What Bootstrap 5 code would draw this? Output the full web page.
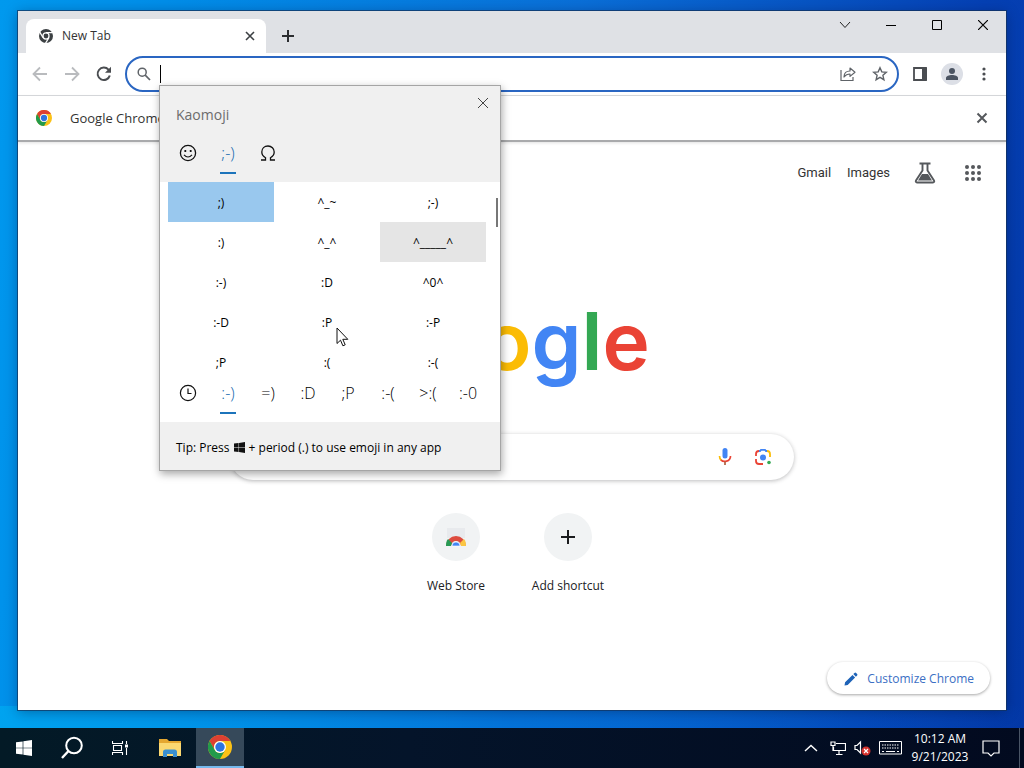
<!DOCTYPE html>
<html lang="en">
<head>
<meta charset="utf-8">
<meta name="viewport" content="width=device-width, initial-scale=1">
<title>New Tab</title>
<link href="https://cdn.jsdelivr.net/npm/bootstrap@5.3.0/dist/css/bootstrap.min.css" rel="stylesheet">
<style>
  body { font-family: "Open Sans", "Noto Sans", sans-serif; font-size: 12px; line-height: 18px; color: #333; background: linear-gradient(100deg, #0099ee 0%, #0090ea 12%, #0a6fd8 50%, #0540b4 85%, #0337a5 100%); }
  button { background: none; border: 0; padding: 0; color: inherit; }
  svg { display: block; flex: none; }
  a { color: inherit; text-decoration: none; }
  .desktop { padding: 11px 18px 18px; background: linear-gradient(90deg, rgba(0,165,240,.9), rgba(0,120,220,.6) 50%, rgba(0,60,180,0)) bottom / 100% 22px no-repeat; }
  .browser { background: #fff; box-shadow: 0 0 0 1px rgba(20,50,90,.7), 0 2px 12px rgba(0,20,60,.4); }
  .strip { background: #dfe1e5; height: 42px; padding-left: 8px; }
  .page-tab { background: #fff; width: 240px; height: 34px; border-radius: 8px 8px 0 0; padding: 0 10px 0 12px; }
  .new-tab { height: 34px; }
  .strip .caption { width: 46px; height: 28px; }
  .tools { height: 43px; border-bottom: 1px solid #d9dbde; padding: 0 15px 0 10px; }
  .tool-group { gap: 14px; margin-left: 14px; }
  .omni { height: 36px; border: 2px solid #2a66c2; border-radius: 18px; padding: 0 9px 0 10px; margin-left: 9px; }
  .omni input { border: 0; outline: 0; background: none; min-width: 0; font-size: 14px; }
  .caret { width: 1px; height: 18px; background: #000; margin-left: 9px; }
  .avatar { width: 22px; height: 22px; border-radius: 50%; background: #dcdfe6; }
  .infobar { height: 46px; padding: 0 18px; gap: 18px; border-bottom: 2px solid #a9aaac; font-size: 13px; box-shadow: 0 1px 3px rgba(0,0,0,.12); }
  .page-links { padding: 20px 24px 0 0; font: 13px/18px Roboto, sans-serif; color: #333; }
  .logo { font: 600 80px/106px Inter, sans-serif; color: #4285f4; margin-top: 104px; }
  .logo .r { color: #ea4335; } .logo .y { color: #fbbc05; } .logo .g { color: #34a853; }
  .hunt { width: 564px; max-width: 90%; height: 46px; border-radius: 23px; box-shadow: 0 1px 4px rgba(32,33,36,.3); padding: 0 22px 0 22px; margin-top: 40px; }
  .hunt input { border: 0; outline: 0; min-width: 0; background: none; }
  .tiles { margin-top: 33px; }
  .tile { width: 112px; color: #202124; }
  .disc { width: 48px; height: 48px; border-radius: 50%; background: #f1f3f4; }
  .customize { height: 32px; border-radius: 16px; padding: 1px 16px 0; margin: 0 16px 16px 0; color: #3b6fc4; box-shadow: 0 1px 3px rgba(0,0,0,.35); }
  .picker { left: 141px; top: 74px; width: 342px; background: #fff; border: 1px solid #a5a5a5; box-shadow: 1px 3px 8px rgba(0,0,0,.35); color: #000; z-index: 5; }
  .picker-head { background: #f0f0f0; height: 96px; padding: 0 8px; }
  .picker-head h1 { font-size: 14px; line-height: 20px; color: #6c6c6c; margin: 19px 0 0 8px; font-weight: 400; }
  .glyph-tab { width: 40px; height: 40px; padding: 2px 0 4px; font-size: 16px; font-weight: 300; position: relative; }
  .glyph-tab.on { color: #0f66ad; }
  .glyph-tab.on::after { content: ""; position: absolute; left: 12px; right: 12px; bottom: 0; height: 2px; background: #1c74bb; }
  .faces { height: 192px; overflow: hidden; padding: 0 14px 0 8px; }
  .faces-grid { display: grid; grid-template-columns: repeat(3, 1fr); grid-auto-rows: 40px; }
  .faces button { padding-top: 2px; }
  .faces .chosen { background: #99c8ee; } .faces .hovered { background: #e5e5e5; }
  .thumb { right: 2px; top: 112px; width: 2px; height: 29px; background: #777; }
  .picker-foot { background: #f0f0f0; height: 48px; padding: 3px 16px 0; gap: 4px; }
  .pointer { left: 176px; top: 241px; }
  .taskbar { height: 40px; background: linear-gradient(90deg, #031a26, #04142a 40%, #020a1f); color: #fff; }
  .taskbar .app { width: 48px; height: 40px; }
  .taskbar .app.active { background: #36495a; border-bottom: 2px solid #76b9ed; }
  .tray { gap: 8px; }
  .clock { width: 60px; }
  .tray .notes { margin: 0 11px 0 4px; }
  .peek { width: 5px; height: 40px; border-left: 1px solid #4a5566; }
</style>
</head>
<body class="vh-100 d-flex flex-column overflow-hidden">
<main class="desktop flex-grow-1 d-flex">
  <section class="browser flex-grow-1 d-flex flex-column position-relative">
    <div class="strip d-flex align-items-end">
      <div class="page-tab d-flex align-items-center gap-2">
        <svg width="16" height="16" viewBox="0 0 24 24"><circle cx="12" cy="12" r="10.500" fill="#3c4043"/><circle cx="12" cy="12" r="5.500" fill="#fff"/><circle cx="12" cy="12" r="3.600" fill="#3c4043"/><path d="M12 7h11M7.600 14.500L2 5M16.400 14.500L11 23.500" stroke="#fff" stroke-width="1.800"/></svg>
        <span class="flex-grow-1">New Tab</span>
        <button aria-label="Close tab"><svg width="12" height="12" viewBox="0 0 12 12"><path d="M2 2l8 8M10 2l-8 8" stroke="#3c4043" stroke-width="1.600"/></svg></button>
      </div>
      <button class="new-tab ms-3" aria-label="New tab"><svg width="12" height="12" viewBox="0 0 12 12"><path d="M6 0v12M0 6h12" stroke="#2b2d30" stroke-width="2"/></svg></button>
      <div class="ms-auto d-flex align-self-start">
        <button class="caption d-grid" aria-label="Search tabs"><svg class="m-auto" width="12" height="12" viewBox="0 0 12 12"><path d="M1 3l5 5.500L11 3" fill="none" stroke="#222"/></svg></button>
        <button class="caption d-grid" aria-label="Minimize"><svg class="m-auto" width="10" height="10" viewBox="0 0 10 10"><path d="M0 5.500h10" stroke="#000"/></svg></button>
        <button class="caption d-grid" aria-label="Maximize"><svg class="m-auto" width="10" height="10" viewBox="0 0 10 10"><path d="M.5.500h9v9h-9z" fill="none" stroke="#000"/></svg></button>
        <button class="caption d-grid" aria-label="Close"><svg class="m-auto" width="10" height="10" viewBox="0 0 10 10"><path d="M0 0l10 10M10 0L0 10" stroke="#000" stroke-width="1.200"/></svg></button>
      </div>
    </div>
    <div class="tools d-flex align-items-center">
      <button class="me-3 ms-1" aria-label="Back"><svg width="16" height="16" viewBox="0 0 16 16"><path d="M15 8H2M8 1.500L1.500 8 8 14.500" fill="none" stroke="#b9bbbe" stroke-width="1.800"/></svg></button>
      <button class="me-3" aria-label="Forward"><svg width="16" height="16" viewBox="0 0 16 16"><path d="M1 8h13M8 1.500L14.500 8 8 14.500" fill="none" stroke="#b9bbbe" stroke-width="1.800"/></svg></button>
      <button class="me-1" aria-label="Reload"><svg width="16" height="16" viewBox="0 0 16 16"><path d="M13.800 9.500A6.200 6.200 0 1 1 12.500 3.700L14 5.200" fill="none" stroke="#4a4d51" stroke-width="2"/><path d="M15 .8v6H9z" fill="#4a4d51"/></svg></button>
      <div class="omni flex-grow-1 d-flex align-items-center">
        <svg width="14" height="14" viewBox="0 0 14 14"><circle cx="5.200" cy="5.200" r="4" fill="none" stroke="#5f6368" stroke-width="1.500"/><path d="M8.200 8.200L13 13" stroke="#5f6368" stroke-width="1.700"/></svg>
        <span class="caret"></span>
        <input class="flex-grow-1" type="text" aria-label="Address and search bar">
        <button class="me-3" aria-label="Share"><svg width="16" height="16" viewBox="0 0 16 16"><path d="M1 4v10.500h12V11" fill="none" stroke="#5f6368" stroke-width="1.200"/><path d="M4 11c0-4 2.500-6 6-6V2l5 4.200-5 4.200V8C7.500 8 5.500 9 4 11z" fill="none" stroke="#5f6368" stroke-width="1.200" stroke-linejoin="round"/></svg></button>
        <button aria-label="Bookmark"><svg width="16" height="16" viewBox="0 0 16 16"><path d="M8 1.800l1.800 4.100 4.500.4-3.400 3 1 4.400L8 11.400l-3.900 2.300 1-4.400-3.400-3 4.500-.4z" fill="none" stroke="#5f6368" stroke-width="1.400"/></svg></button>
      </div>
      <div class="tool-group d-flex align-items-center">
        <button aria-label="Side panel"><svg width="14" height="14" viewBox="0 0 14 14"><path d="M1 1h12v12H1z" fill="none" stroke="#4a4d51" stroke-width="1.800"/><path d="M9 1h5v12H9z" fill="#4a4d51"/></svg></button>
        <button class="avatar d-grid" aria-label="Profile"><svg class="m-auto" width="12" height="12" viewBox="0 0 12 12"><circle cx="6" cy="3" r="3" fill="#4b5462"/><path d="M0 12v-2c0-2 3-3 6-3s6 1 6 3v2z" fill="#4b5462"/></svg></button>
        <button aria-label="Menu"><svg width="14" height="14" viewBox="0 0 14 14" fill="#4a4d51"><circle cx="7" cy="2" r="1.600"/><circle cx="7" cy="7" r="1.600"/><circle cx="7" cy="12" r="1.600"/></svg></button>
      </div>
    </div>
    <div class="infobar d-flex align-items-center">
      <svg width="16" height="16" viewBox="0 0 24 24"><use href="#chromeMark"/></svg>
      <span class="flex-grow-1">Google Chrome</span>
      <button aria-label="Dismiss"><svg width="12" height="12" viewBox="0 0 12 12"><path d="M1.500 1.500l9 9M10.500 1.500l-9 9" stroke="#55585c" stroke-width="2"/></svg></button>
    </div>
    <div class="flex-grow-1 d-flex flex-column">
      <nav class="page-links d-flex justify-content-end align-items-center">
        <a href="#" class="me-3">Gmail</a><a href="#" class="me-4">Images</a>
        <button class="me-4" aria-label="Labs"><svg width="22" height="22" viewBox="0 0 22 22"><path d="M5.500 1.500h11M8.500 2v6.500L2 18.500c-.6 1 0 2 1 2h16c1 0 1.600-1 1-2L13.500 8.500V2" fill="none" stroke="#55585c" stroke-width="1.900"/><path d="M8 12h6l4 6.500H4z" fill="#55585c"/></svg></button>
        <button class="ps-1" aria-label="Google apps"><svg width="18" height="18" viewBox="1 1 18 18" fill="#55585c"><g id="dots"><circle cx="4" cy="4" r="2"/><circle cx="10" cy="4" r="2"/><circle cx="16" cy="4" r="2"/></g><use href="#dots" y="6"/><use href="#dots" y="12"/></svg></button>
      </nav>
      <div class="logo text-center">G<span class="r">o</span><span class="y">o</span>g<span class="g">l</span><span class="r">e</span></div>
      <div class="hunt mx-auto d-flex align-items-center">
        <input class="flex-grow-1" type="text" aria-label="Search Google">
        <button class="me-3 pe-1" aria-label="Search by voice"><svg width="18" height="20" viewBox="1 0 18 20"><path d="M7.500 3.500a2.500 2.500 0 0 1 5 0V9a2.500 2.500 0 0 1-5 0z" fill="#4285f4"/><path d="M4.500 9c0 2 .6 3.300 1.800 4.400" fill="none" stroke="#fbbc05" stroke-width="1.700"/><path d="M6 13c2.500 2.300 9.500 2 9.500-4" fill="none" stroke="#ea4335" stroke-width="1.700"/><path d="M10 14.500V18" stroke="#b0603f" stroke-width="1.700"/></svg></button>
        <button aria-label="Search by image"><svg width="18" height="18" viewBox="0 0 18 18" fill="none" stroke-width="1.800"><circle cx="9" cy="9.500" r="3" fill="#4285f4"/><path d="M5 3h1L7 1.800h4L12 3h1" stroke="#4285f4"/><path d="M2 8V6q0-3 3-3" stroke="#ea4335"/><path d="M13 3q3 0 3 3v3" stroke="#fbbc05"/><path d="M2 11v2q0 3 3 3h4" stroke="#ea4335"/><circle cx="15" cy="14.500" r="1.800" fill="#34a853"/></svg></button>
      </div>
      <div class="tiles d-flex justify-content-center">
        <a href="#" class="tile d-flex flex-column align-items-center"><span class="disc d-grid mb-3"><svg class="m-auto" width="22" height="22" viewBox="0 0 22 22"><path d="M2 2h18v10H2z" fill="#e8eaed"/><path d="M1 20a10 10 0 0 1 20 0h-5a5 5 0 0 0-10 0z" fill="#dd4b3e"/><path d="M1 20q0-5 2-7l4 4-1 3z" fill="#279a54"/><path d="M21 20q0-5-2-7l-4 4 1 3z" fill="#fbc643"/><path d="M7 20a4 4 0 0 1 8 0z" fill="#4285f4" stroke="#fff" stroke-width=".6"/></svg></span>Web Store</a>
        <a href="#" class="tile d-flex flex-column align-items-center"><span class="disc d-grid mb-3"><svg class="m-auto" width="14" height="14" viewBox="0 0 14 14"><path d="M7 0v14M0 7h14" stroke="#1b1c1e" stroke-width="2"/></svg></span>Add shortcut</a>
      </div>
      <button class="customize mt-auto ms-auto d-flex align-items-center gap-2"><svg width="16" height="16" viewBox="0 0 16 16" fill="#1e63b8"><path d="M1.500 14.500l.6-3.200 7.400-7.400 2.600 2.600-7.400 7.400zM10.300 3.100l1.200-1.200q.8-.8 1.600 0l1 1q.8.8 0 1.600l-1.200 1.200z"/></svg>Customize Chrome</button>
    </div>

    <div class="picker position-absolute" role="dialog" aria-label="Kaomoji">
      <div class="picker-head d-flex flex-column">
        <div class="d-flex justify-content-between align-items-start"><h1>Kaomoji</h1>
          <button class="mt-2 me-1 pt-1" aria-label="Close"><svg width="10" height="10" viewBox="0 0 10 10"><path d="M0 0l10 10M10 0L0 10" stroke="#444"/></svg></button></div>
        <div class="d-flex mt-auto mb-2">
          <button class="glyph-tab d-grid" aria-label="Emoji"><svg class="m-auto" width="18" height="18" viewBox="0 0 18 18"><circle cx="9" cy="9" r="7.600" fill="none" stroke="#111" stroke-width="1.300"/><circle cx="6.300" cy="7" r="1.100"/><circle cx="11.700" cy="7" r="1.100"/><path d="M5 10.800q4 4.400 8 0" fill="none" stroke="#111" stroke-width="1.200"/></svg></button>
          <button class="glyph-tab on">;-)</button>
          <button class="glyph-tab d-grid" aria-label="Symbols"><svg class="m-auto" width="16" height="16" viewBox="0 0 16 16"><path d="M1 15h4.500v-2.300C3 11.300 1.800 9.300 1.800 7c0-3.500 2.600-6 6.200-6s6.200 2.500 6.200 6c0 2.300-1.200 4.300-3.700 5.700V15H15" fill="none" stroke="#111" stroke-width="1.300"/></svg></button>
        </div>
      </div>
      <div class="faces"><div class="faces-grid">
        <button class="chosen">;)</button><button>^_~</button><button>;-)</button>
        <button>:)</button><button>^_^</button><button class="hovered">^_____^</button>
        <button>:-)</button><button>:D</button><button>^0^</button>
        <button>:-D</button><button>:P</button><button>:-P</button>
        <button>;P</button><button>:(</button><button>:-(</button>
      </div></div>
      <span class="thumb position-absolute"></span>
      <div class="d-flex px-2 pb-2">
        <button class="glyph-tab d-grid" aria-label="Recent"><svg class="m-auto" width="18" height="18" viewBox="0 0 18 18"><circle cx="9" cy="9" r="7.600" fill="none" stroke="#111" stroke-width="1.200"/><path d="M9 4.500V9.500h3.500" fill="none" stroke="#111" stroke-width="1.200"/></svg></button>
        <button class="glyph-tab on">:-)</button><button class="glyph-tab">=)</button><button class="glyph-tab">:D</button><button class="glyph-tab">;P</button><button class="glyph-tab">:-(</button><button class="glyph-tab">&gt;:(</button><button class="glyph-tab">:-0</button>
      </div>
      <div class="picker-foot d-flex align-items-center"><span>Tip: Press</span><svg width="11" height="11" viewBox="0 0 24 24" fill="#111"><use href="#winMark"/></svg><span>+ period (.) to use emoji in any app</span></div>
      <svg class="pointer position-absolute" width="13" height="20" viewBox="0 0 13 20"><path d="M1 1v15.500l3.500-3.300 2.400 5.600 2.300-1-2.400-5.500h5z" fill="#fff" stroke="#111"/></svg>
    </div>
  </section>
</main>
<footer class="taskbar d-flex align-items-center">
  <button class="app d-grid" aria-label="Start"><svg class="m-auto" width="16" height="16" viewBox="0 0 24 24" fill="#fff"><g id="winMark"><path d="M0 3.500l10-1.400v9.400H0zM11 2L24 0v11.500H11zM0 12.500h10v9.400L0 20.500zM11 12.500h13V24l-13-2z"/></g></svg></button>
  <button class="app d-grid" aria-label="Search"><svg class="m-auto" width="24" height="24" viewBox="0 0 24 24"><circle cx="14" cy="9.500" r="7.800" fill="none" stroke="#fff" stroke-width="2"/><path d="M8.500 15L2 22" stroke="#fff" stroke-width="2.400"/></svg></button>
  <button class="app d-grid" aria-label="Task view"><svg class="m-auto" width="16" height="16" viewBox="0 0 16 16"><path d="M.5 1v2.500h10V1M.5 15v-2.500h10V15M1.500 5.500h8v5h-8zM14.500 1v3M14.500 8v7" fill="none" stroke="#fff" stroke-width="1.100"/><path d="M13 4.500h3v3h-3z" fill="#fff"/></svg></button>
  <button class="app d-grid me-1 ps-1" aria-label="File Explorer"><svg class="m-auto" width="22" height="18" viewBox="0 0 22 18"><path d="M0 0h8l2 2h12v15H0z" fill="#e5a730"/><path d="M0 4h22v13H0z" fill="#fbd871"/><path d="M4 18v-5q0-2.500 2.500-2.500h9q2.500 0 2.500 2.500v5h-4v-3H8v3z" fill="#3a8fd0"/></svg></button>
  <button class="app active d-grid" aria-label="Google Chrome"><svg class="m-auto" width="24" height="24" viewBox="0 0 24 24"><g id="chromeMark"><circle cx="12" cy="12" r="12" fill="#fbc116"/><path d="M1.600 6A12 12 0 0 1 22.400 6H12a6 6 0 0 0-5.200 9z" fill="#dd4032"/><path d="M1.600 6A12 12 0 0 0 12 24l5.200-9A6 6 0 0 1 6.800 15z" fill="#229a4b"/><circle cx="12" cy="12" r="6" fill="#fff"/><circle cx="12" cy="12" r="4.700" fill="#2f74e0"/></g></svg></button>
  <div class="tray ms-auto d-flex align-items-center">
    <button aria-label="Show hidden icons"><svg width="14" height="8" viewBox="0 0 14 8"><path d="M1 7l6-5.500L13 7" fill="none" stroke="#fff" stroke-width="1.400"/></svg></button>
    <svg class="ms-1" width="16" height="16" viewBox="0 0 16 16" fill="none" stroke="#fff" stroke-width="1.200"><path d="M6 3.500h9.500v7h-12V7M9 10.500V14M6 14.500h6.500M1 2h4v3.500H1zM3 5.500V11"/></svg>
    <svg width="17" height="16" viewBox="0 0 17 16"><path d="M1 5.500h2l3.500-3.500v11L3 9.500H1z" fill="none" stroke="#fff" stroke-width="1.200"/><circle cx="12" cy="11" r="4.500" fill="#d6322d"/><path d="M10 9l4 4M14 9l-4 4" stroke="#fff" stroke-width="1.200"/></svg>
    <svg width="23" height="14" viewBox="0 0 23 14" fill="none" stroke="#fff"><path d="M.5.500h22v12.500H.5z"/><path d="M3 4h17M3 7h17" stroke-dasharray="1.500 1"/><path d="M3 10.500h2M7 10.500h9M18 10.500h2"/></svg>
    <div class="clock text-center">10:12 AM<br>9/21/2023</div>
    <button class="notes" aria-label="Notifications"><svg width="18" height="18" viewBox="0 0 18 18"><path d="M1 2h16v12h-5l-3 3-3-3H1z" fill="none" stroke="#fff" stroke-width="1.200"/></svg></button>
    <button class="peek" aria-label="Show desktop"></button>
  </div>
</footer>
<script src="https://cdn.jsdelivr.net/npm/bootstrap@5.3.0/dist/js/bootstrap.bundle.min.js"></script>
</body>
</html>
